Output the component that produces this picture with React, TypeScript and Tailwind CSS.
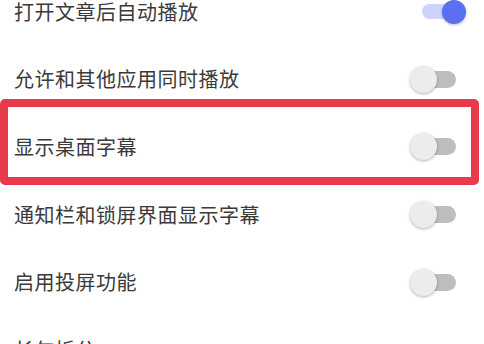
import React from 'react';

type Row = { label: string; on?: boolean; toggle?: boolean };

const rows: Row[] = [
  { label: '打开文章后自动播放', on: true, toggle: true },
  { label: '允许和其他应用同时播放', toggle: true },
  { label: '显示桌面字幕', toggle: true },
  { label: '通知栏和锁屏界面显示字幕', toggle: true },
  { label: '启用投屏功能', toggle: true },
  { label: '长句拆分' },
];

function Switch({ on }: { on?: boolean }) {
  if (on) {
    return (
      <div className="relative w-[44px] h-[24px] mr-[18px] flex items-center">
        <div className="w-[38px] h-[15px] rounded-full bg-[#cdd3fa]" />
        <div className="absolute right-0 top-0 w-[24px] h-[24px] rounded-full bg-[#5b6ff2] shadow-[0_1px_3px_rgba(0,0,0,0.25)]" />
      </div>
    );
  }
  return (
    <div className="relative w-[46px] h-[27px] mr-[28px] flex items-center justify-end">
      <div className="w-[36px] h-[17px] rounded-full bg-[#bebebe]" />
      <div className="absolute left-0 top-0 w-[27px] h-[27px] rounded-full bg-[#ececec] shadow-[0_1px_3px_rgba(0,0,0,0.3)]" />
    </div>
  );
}

export default function App() {
  return (
    <div
      className="relative w-[484px] h-[344px] overflow-hidden bg-white"
      style={{ fontFamily: '"Noto Sans CJK SC", "Noto Sans", sans-serif' }}
    >
      <div className="-mt-[22px] flex flex-col">
        {rows.map((r) => (
          <div key={r.label} className="h-[67.6px] flex items-center justify-between pl-[14px]">
            <span className="text-[20px] leading-none tracking-[0.5px] text-[#3a3a3a]">{r.label}</span>
            {r.toggle && <Switch on={r.on} />}
          </div>
        ))}
      </div>

      {/* annotation highlight */}
      <div className="absolute left-0 top-[99px] w-[479px] h-[86px] border-[8px] border-[#e83a48] rounded-[5px]" />
    </div>
  );
}
